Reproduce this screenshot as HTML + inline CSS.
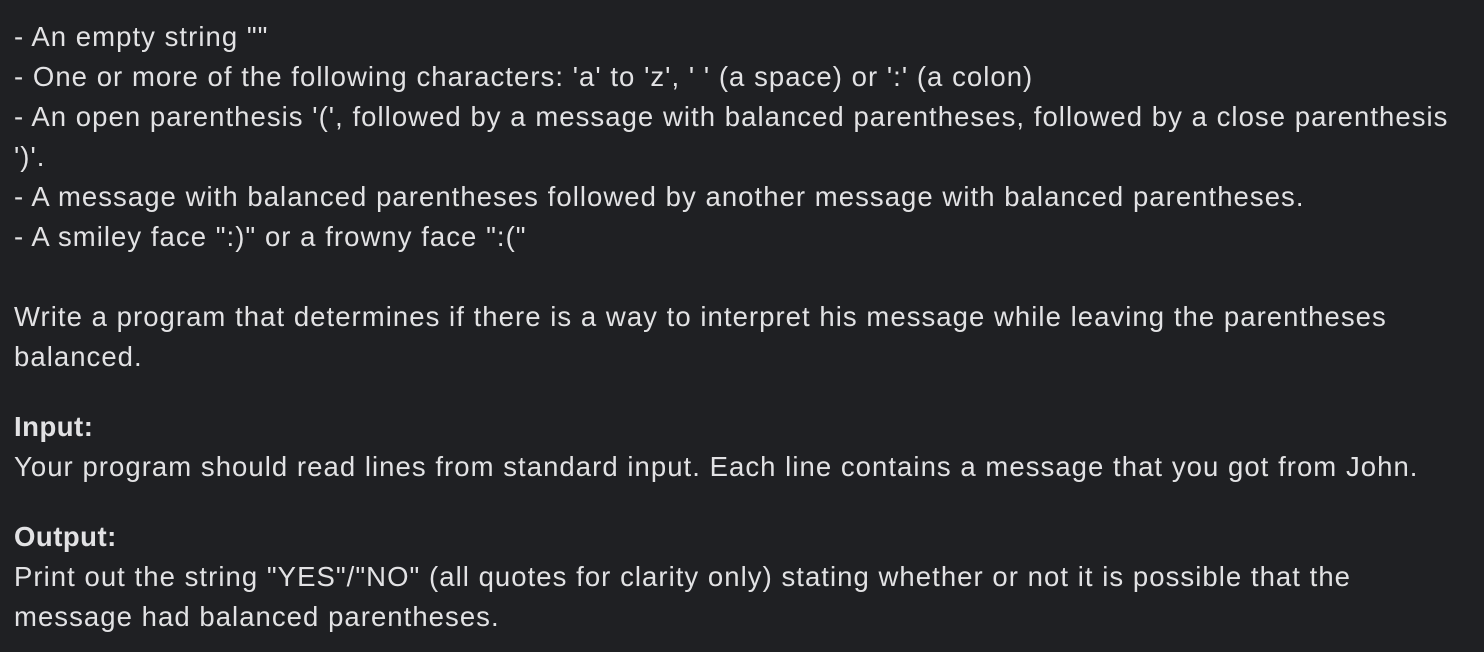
<!DOCTYPE html>
<html><head><style>
html,body{margin:0;padding:0;background:#1f2023;width:1484px;height:652px;overflow:hidden}
body{font-family:"Liberation Sans",Arial,sans-serif;font-size:27.5px;color:#e2e2e4;letter-spacing:1.05px}
.l{position:absolute;left:14px;white-space:nowrap;line-height:40px;height:40px}
b{font-weight:bold;letter-spacing:0.5px}
</style></head><body>
<div class="l" style="top:17px">- An empty string ""</div>
<div class="l" style="top:57px">- One or more of the following characters: 'a' to 'z', ' ' (a space) or ':' (a colon)</div>
<div class="l" style="top:97px">- An open parenthesis '(', followed by a message with balanced parentheses, followed by a close parenthesis</div>
<div class="l" style="top:137px">')'.</div>
<div class="l" style="top:177px">- A message with balanced parentheses followed by another message with balanced parentheses.</div>
<div class="l" style="top:217px">- A smiley face ":)" or a frowny face ":("</div>
<div class="l" style="top:297px">Write a program that determines if there is a way to interpret his message while leaving the parentheses</div>
<div class="l" style="top:337px">balanced.</div>
<div class="l" style="top:407px"><b>Input:</b></div>
<div class="l" style="top:447px">Your program should read lines from standard input. Each line contains a message that you got from John.</div>
<div class="l" style="top:517px"><b>Output:</b></div>
<div class="l" style="top:557px">Print out the string "YES"/"NO" (all quotes for clarity only) stating whether or not it is possible that the</div>
<div class="l" style="top:597px">message had balanced parentheses.</div>
</body></html>
